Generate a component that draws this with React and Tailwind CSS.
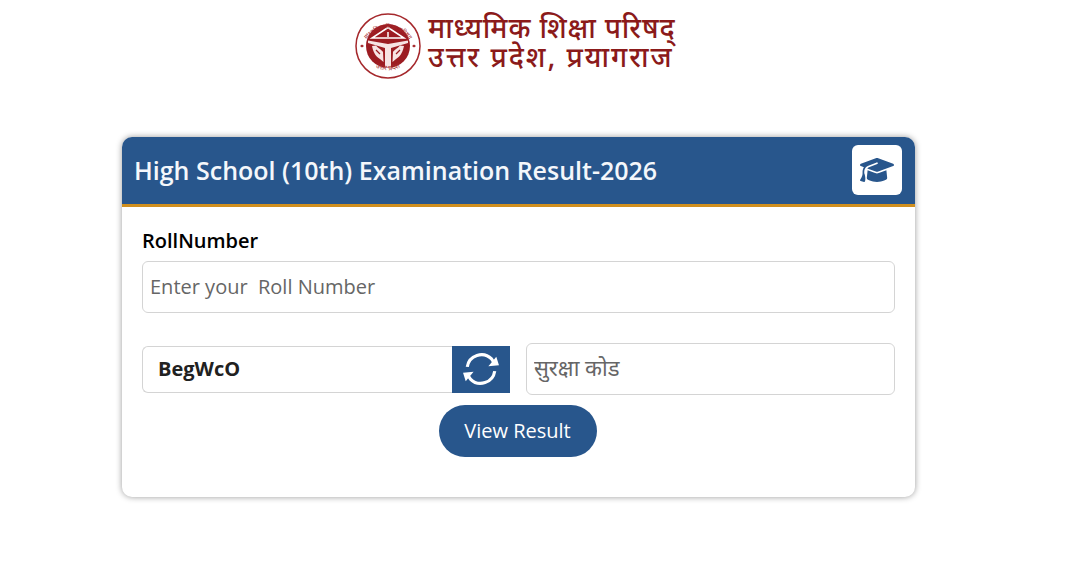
// Board result lookup form with roll number and security code
import { FaGraduationCap } from 'react-icons/fa6';

const font = { sans: "font-['Open_Sans','Noto_Sans',sans-serif]" };

// Round UP board seal, drawn from the header picture
const Seal = () => (
  <svg width="66" height="66" viewBox="0 0 66 66" className="shrink-0">
    <circle cx="33" cy="33" r="32" fill="none" stroke="#a5282c" strokeWidth="1.5" />
    <circle cx="33" cy="33" r="22" fill="#9c1c22" />
    <path d="M33 14.5 L49 25 H17 Z" fill="none" stroke="#fff" strokeWidth="1.5" />
    <path d="M33 19v5" stroke="#fff" strokeWidth="1.5" />
    <path d="M13 27.5 L33 31 L53 27.5 L53 30 L36 35 V54.5 H30 V35 L13 30 Z" fill="#f7e4e4" />
    <path d="M17 33 L21 32.5 C24 36 27 37 28 39 L28.5 49 L25 46 C20 43 18 38 17 33 Z" fill="#f7e4e4" />
    <path d="M49 33 L45 32.5 C42 36 39 37 38 39 L37.5 49 L41 46 C46 43 48 38 49 33 Z" fill="#f7e4e4" />
    <path d="M21 37 L25 41 M45 37 L41 41" stroke="#9c1c22" strokeWidth="1.2" />
    <path d="M5 33l2-1.5 2 1.5-2 1.5z M57 33l2-1.5 2 1.5-2 1.5z" fill="#a5282c" />
    <path id="sealTop" d="M8 36 A25.5 25.5 0 0 1 58 36" fill="none" />
    <text fontSize="6" fill="#a5282c" fontFamily="'Noto Sans Devanagari','Noto Sans',sans-serif">
      <textPath href="#sealTop" startOffset="50%" textAnchor="middle">माध्यमिक शिक्षा परिषद्</textPath>
    </text>
    <path id="sealBottom" d="M12 46 A25 25 0 0 0 54 46" fill="none" />
    <text fontSize="7" fill="#a5282c" fontFamily="'Noto Sans Devanagari','Noto Sans',sans-serif">
      <textPath href="#sealBottom" startOffset="50%" textAnchor="middle">उत्तर प्रदेश</textPath>
    </text>
  </svg>
);

const RefreshIcon = () => (
  <svg width="38" height="38" viewBox="0 0 36 36" fill="none">
    <path d="M5 16 A13.5 13.5 0 0 1 28 8.5 L31 13" stroke="#fff" strokeWidth="3" />
    <path d="M31 20 A13.5 13.5 0 0 1 8 27.5 L5 23" stroke="#fff" strokeWidth="3" />
    <path d="M25 15.5 L35 14.5 L32.5 6.5 Z" fill="#fff" />
    <path d="M11 20.5 L1 21.5 L3.5 29.5 Z" fill="#fff" />
  </svg>
);

const App = () => (
  <div className={`min-h-[588px] bg-white ${font.sans}`}>
    <header className="flex items-center gap-[7px] ml-[355px] pt-[11px] h-[80px]">
      <Seal />
      <div className="font-['Noto_Sans_Devanagari','Noto_Sans',sans-serif] text-[28px] leading-[29px] font-medium text-[#8b1a1a] whitespace-nowrap">
        <div className="tracking-[0.85px]">माध्यमिक शिक्षा परिषद्</div>
        <div className="tracking-[2px]">उत्तर प्रदेश, प्रयागराज</div>
      </div>
    </header>

    <main className="ml-[122px] mt-[57px] w-[793px] h-[360px] rounded-[10px] bg-white shadow-[0_0_6px_rgba(0,0,0,0.4)] overflow-hidden">
      <div className="flex items-center justify-between h-[70px] bg-[#28568c] border-b-[3px] border-[#d08f1e] pl-[12px] pr-[13px]">
        <h1 className="text-[25px] font-semibold text-[#f4f7fb]">High School (10th) Examination Result-2026</h1>
        <div className="flex items-center justify-center w-[50px] h-[50px] mb-[1px] rounded-[6px] bg-white text-[#28568c]">
          <FaGraduationCap size={34} />
        </div>
      </div>

      <form className="px-[20px] pt-[21px]">
        <label className="block text-[20px] leading-[26px] font-semibold text-black">RollNumber</label>
        <input
          className="mt-[7px] block w-full h-[52px] rounded-[6px] border border-[#d4d4d4] px-[7px] pb-[2px] text-[20px] outline-none placeholder:text-[#666]"
          placeholder="Enter your  Roll Number"
        />

        <div className="flex items-center gap-[16px] mt-[30px]">
          <div className="flex w-[368px] h-[47px]">
            <div className="flex-1 flex items-center rounded-l-[6px] border border-r-0 border-[#d4d4d4] pl-[15px] text-[20px] font-bold text-[#212121]">
              BegWcO
            </div>
            <button type="button" className="flex items-center justify-center w-[58px] bg-[#28568c]">
              <RefreshIcon />
            </button>
          </div>
          <input
            className="flex-1 min-w-0 h-[52px] rounded-[6px] border border-[#d4d4d4] px-[7px] pb-[4px] text-[22px] outline-none placeholder:text-[#666]"
            placeholder="सुरक्षा कोड"
          />
        </div>

        <div className="flex justify-center mt-[10px] pr-[2px]">
          <button type="button" className="w-[158px] h-[52px] rounded-full bg-[#28568c] text-[20px] text-white">
            View Result
          </button>
        </div>
      </form>
    </main>
  </div>
);

export default App;
